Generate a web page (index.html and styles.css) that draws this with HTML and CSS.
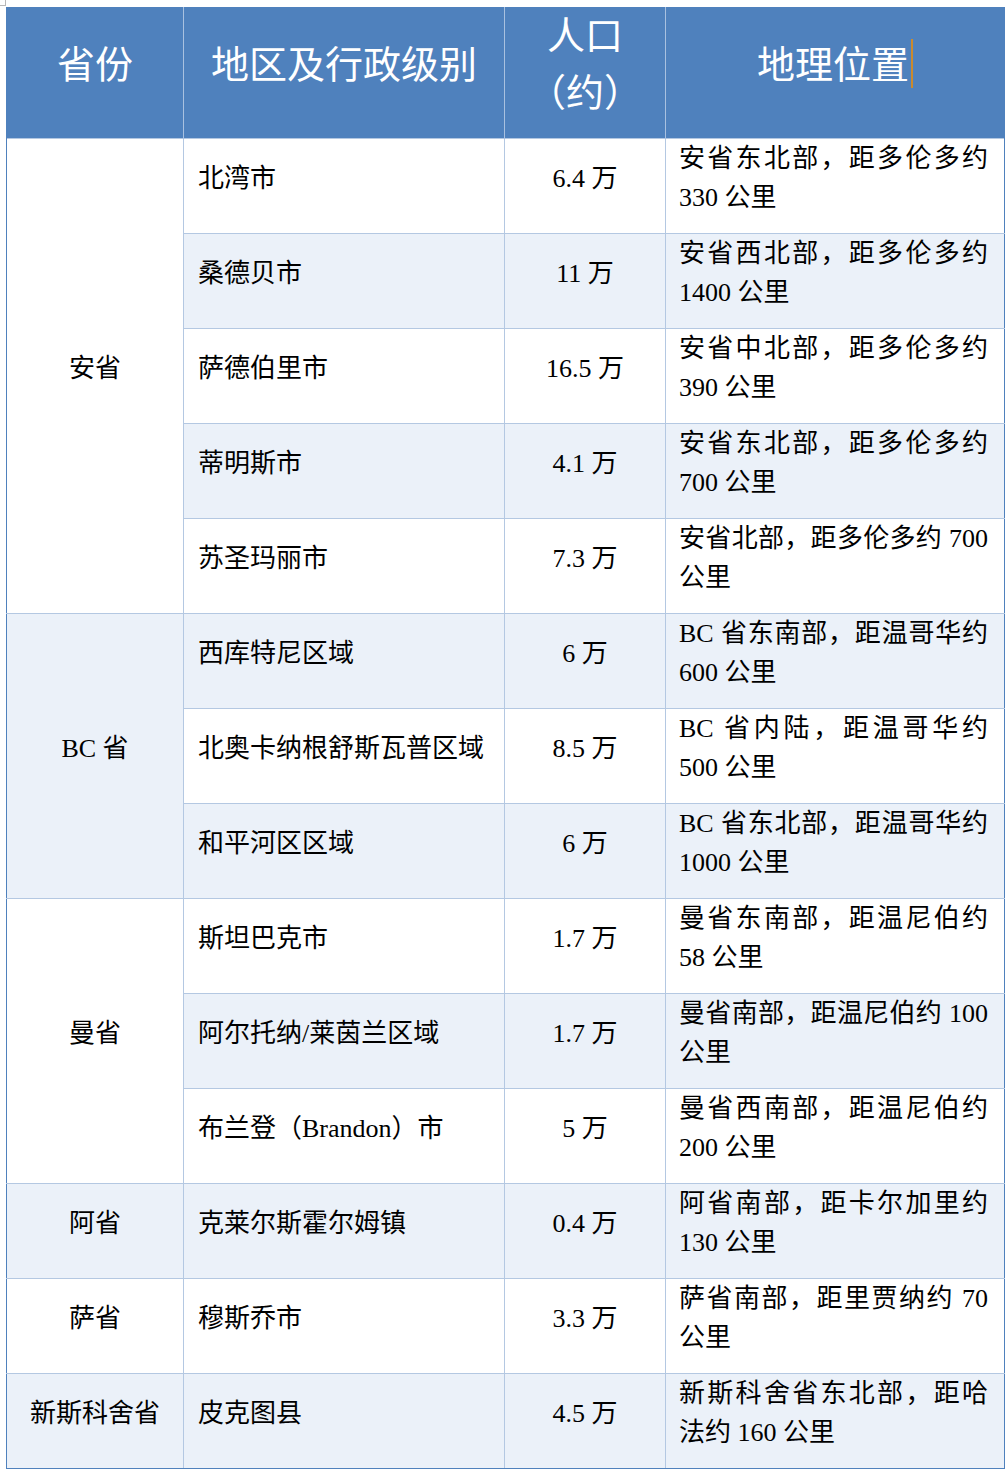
FILE: index.html
```html
<!DOCTYPE html>
<html lang="zh-CN">
<head>
<meta charset="utf-8">
<title>地区表</title>
<link rel="stylesheet" href="styles.css">
</head>
<body>
<div class="corner"></div>
<table class="tbl">
  <colgroup>
    <col class="c1"><col class="c2"><col class="c3"><col class="c4">
  </colgroup>
  <thead>
    <tr class="head">
      <th>省份</th>
      <th>地区及行政级别</th>
      <th>人口<br>（约）</th>
      <th>地理位置<span class="caret"></span></th>
    </tr>
  </thead>
  <tbody>
    <tr>
      <td class="prov" rowspan="5">安省</td>
      <td class="name">北湾市</td><td class="pop">6.4 万</td><td class="loc">安省东北部，距多伦多约 330 公里</td>
    </tr>
    <tr class="band">
      <td class="name">桑德贝市</td><td class="pop">11 万</td><td class="loc">安省西北部，距多伦多约 1400 公里</td>
    </tr>
    <tr>
      <td class="name">萨德伯里市</td><td class="pop">16.5 万</td><td class="loc">安省中北部，距多伦多约 390 公里</td>
    </tr>
    <tr class="band">
      <td class="name">蒂明斯市</td><td class="pop">4.1 万</td><td class="loc">安省东北部，距多伦多约 700 公里</td>
    </tr>
    <tr>
      <td class="name">苏圣玛丽市</td><td class="pop">7.3 万</td><td class="loc">安省北部，距多伦多约 700 公里</td>
    </tr>
    <tr class="band">
      <td class="prov" rowspan="3">BC 省</td>
      <td class="name">西库特尼区域</td><td class="pop">6 万</td><td class="loc">BC 省东南部，距温哥华约 600 公里</td>
    </tr>
    <tr>
      <td class="name">北奥卡纳根舒斯瓦普区域</td><td class="pop">8.5 万</td><td class="loc">BC 省内陆，距温哥华约 500 公里</td>
    </tr>
    <tr class="band">
      <td class="name">和平河区区域</td><td class="pop">6 万</td><td class="loc">BC 省东北部，距温哥华约 1000 公里</td>
    </tr>
    <tr>
      <td class="prov" rowspan="3">曼省</td>
      <td class="name">斯坦巴克市</td><td class="pop">1.7 万</td><td class="loc">曼省东南部，距温尼伯约 58 公里</td>
    </tr>
    <tr class="band">
      <td class="name">阿尔托纳/莱茵兰区域</td><td class="pop">1.7 万</td><td class="loc">曼省南部，距温尼伯约 100 公里</td>
    </tr>
    <tr>
      <td class="name">布兰登（Brandon）市</td><td class="pop">5 万</td><td class="loc">曼省西南部，距温尼伯约 200 公里</td>
    </tr>
    <tr class="band">
      <td class="prov">阿省</td>
      <td class="name">克莱尔斯霍尔姆镇</td><td class="pop">0.4 万</td><td class="loc">阿省南部，距卡尔加里约 130 公里</td>
    </tr>
    <tr>
      <td class="prov">萨省</td>
      <td class="name">穆斯乔市</td><td class="pop">3.3 万</td><td class="loc">萨省南部，距里贾纳约 70 公里</td>
    </tr>
    <tr class="band">
      <td class="prov">新斯科舍省</td>
      <td class="name">皮克图县</td><td class="pop">4.5 万</td><td class="loc">新斯科舍省东北部，距哈法约 160 公里</td>
    </tr>
  </tbody>
</table>
</body>
</html>
```

FILE: styles.css
```css
html, body {
  margin: 0;
  padding: 0;
  background: #ffffff;
}
body {
  padding: 7px 0 0 6px;
  font-family: "Liberation Serif", "Noto Sans CJK SC", serif;
  color: #000000;
}
.corner {
  position: absolute;
  left: 0;
  top: 0;
  width: 5px;
  height: 5px;
  border-right: 1px solid #b8b8b8;
  border-bottom: 1px solid #b8b8b8;
}
.tbl {
  border-collapse: collapse;
  table-layout: fixed;
  width: 998px;
  border: 1px solid #4f81bd;
}
.c1 { width: 177px; }
.c2 { width: 321px; }
.c3 { width: 161px; }
.c4 { width: 339px; }

.head {
  height: 130px;
  background: #4f81bd;
}
.head th {
  color: #ffffff;
  font-weight: normal;
  font-size: 38px;
  line-height: 57px;
  text-align: center;
  vertical-align: middle;
  padding: 0 4px 16px;
  border-left: 1px solid #a9c1e0;
  border-right: 1px solid #a9c1e0;
  border-top: 1px solid #4f81bd;
}
.head th:first-child { border-left: 1px solid #4f81bd; }
.head th:last-child { border-right: 1px solid #4f81bd; }
.caret {
  display: inline-block;
  width: 0;
  height: 49px;
  border-left: 2px solid #c98a2e;
  vertical-align: -10px;
  margin-left: 2px;
}

tbody tr {
  height: 94px;
}
tbody td {
  font-size: 26px;
  line-height: 39px;
  vertical-align: middle;
  padding: 0 13px 16px;
  border: 1px solid #b4c8e2;
}
tbody td.prov {
  border-left: 1px solid #4f81bd;
  text-align: center;
  padding-left: 4px;
  padding-right: 4px;
}
tbody td.loc {
  border-right: 1px solid #4f81bd;
  text-align: justify;
  padding-left: 13px;
  padding-right: 16px;
}
tbody tr:last-child td { border-bottom: 1px solid #4f81bd; }
.band td { background: #ebf1f9; }
.name { text-align: left; padding-left: 14px; }
.pop { text-align: center; }
```
